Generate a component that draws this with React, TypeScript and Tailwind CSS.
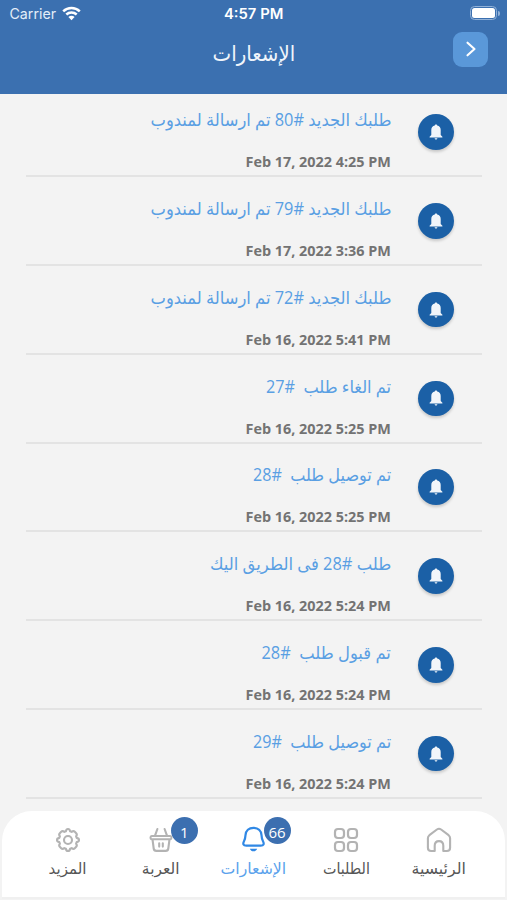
import { useLayoutEffect, useRef } from 'react';
import type { ReactNode } from 'react';

const arabic = "font-['Open_Sans','DejaVu_Sans',sans-serif]";

type FitProps = { text: string; width: number; className?: string; dir?: 'rtl' | 'ltr' };

// A single line of text squeezed or stretched to an exact width.
function Fit({ text, width, className = '', dir = 'rtl' }: FitProps) {
  const ref = useRef<HTMLSpanElement>(null);
  useLayoutEffect(() => {
    const el = ref.current;
    if (el) el.style.transform = `scaleX(${width / el.offsetWidth})`;
  }, [text, width]);
  return (
    <div dir={dir} className="flex justify-center whitespace-pre" style={{ width }}>
      <span ref={ref} className={`inline-block shrink-0 origin-center ${className}`}>{text}</span>
    </div>
  );
}

const items = [
  { title: 'طلبك الجديد #80 تم ارسالة لمندوب', w: 241, date: 'Feb 17, 2022 4:25 PM' },
  { title: 'طلبك الجديد #79 تم ارسالة لمندوب', w: 241, date: 'Feb 17, 2022 3:36 PM' },
  { title: 'طلبك الجديد #72 تم ارسالة لمندوب', w: 241, date: 'Feb 16, 2022 5:41 PM' },
  { title: 'تم الغاء طلب  #27', w: 125, date: 'Feb 16, 2022 5:25 PM' },
  { title: 'تم توصيل طلب  #28', w: 138, date: 'Feb 16, 2022 5:25 PM' },
  { title: 'طلب #28 فى الطريق اليك', w: 181, date: 'Feb 16, 2022 5:24 PM' },
  { title: 'تم قبول طلب  #28', w: 129, date: 'Feb 16, 2022 5:24 PM' },
  { title: 'تم توصيل طلب  #29', w: 138, date: 'Feb 16, 2022 5:24 PM' },
];

function Row({ title, w, date, first }: { title: string; w: number; date: string; first: boolean }) {
  return (
    <div className={`flex shrink-0 items-end border-b-2 border-[#e3e3e3] ${first ? 'h-[83.8px]' : 'h-[88.8px]'}`}>
      <div className="flex h-[70px] w-[365px] flex-col items-end justify-between pb-[3px]">
        <Fit text={title} width={w} className={`${arabic} text-[17.500px] leading-[28px] text-[#5a9fe3]`} />
        <Fit text={date} width={145} dir="ltr" className="font-['Open_Sans',sans-serif] text-[14.3px] leading-[20px] font-bold text-[#737373]" />
      </div>
      <div className="mb-[25.5px] ml-[27px] flex size-[35.5px] items-center justify-center rounded-full bg-[#1b60a6] shadow-[0_2px_3px_rgba(0,0,0,0.18)]">
        <svg width="14" height="16" viewBox="0 0 14 16" fill="#f1f5fa">
          <path d="M7 .4c-.8 0-1.200.5-1.200 1.200C3.600 2.100 2.300 3.800 2.300 6v5L.6 12.700v.8h12.800v-.8L11.700 11V6c0-2.200-1.300-3.900-3.500-4.400C8.200.9 7.800.4 7 .4ZM5.600 14.200c.1.900.7 1.400 1.400 1.400s1.300-.5 1.400-1.400Z" />
        </svg>
      </div>
    </div>
  );
}

const gray = { fill: 'none', stroke: '#b3b3b3', strokeWidth: 2.1, strokeLinecap: 'round', strokeLinejoin: 'round' } as const;

const gear = (
  <svg width="26" height="26" viewBox="0 0 26 26" {...gray}>
    <path d="M10.900 4.300C11.200 2.600 11.800 2 13 2s1.800.6 2.100 2.300l1.500.6c1.400-1 2.300-1 3.200-.1l1.400 1.400c.9.900.9 1.800-.1 3.200l.6 1.500c1.700.3 2.300.900 2.300 2.100s-.6 1.800-2.300 2.100l-.6 1.500c1 1.400 1 2.300.1 3.200l-1.400 1.400c-.9.900-1.800.9-3.200-.1l-1.500.6C14.800 23.400 14.200 24 13 24s-1.800-.6-2.100-2.300l-1.500-.6c-1.400 1-2.300 1-3.200.1l-1.400-1.400c-.9-.9-.9-1.800.1-3.200l-.6-1.500C2.600 14.800 2 14.200 2 13s.6-1.800 2.300-2.100l.6-1.500c-1-1.400-1-2.300-.1-3.200l1.400-1.400c.9-.9 1.800-.9 3.200.1Z" />
    <circle cx="13" cy="13" r="4" />
  </svg>
);
const basket = (
  <svg width="26" height="26" viewBox="0 0 26 26" {...gray}>
    <path d="M3.600 9h18.800c1.400 0 1.400 3.200 0 3.200H3.600c-1.400 0-1.400-3.200 0-3.200ZM4.500 12.300l1.200 9.200c.2 1.600 1 2.400 2.600 2.400h9.400c1.600 0 2.400-.8 2.600-2.400l1.200-9.200M9.400 2 7 8.700M16.600 2 19 8.700M11.200 16.200v3.400M14.800 16.200v3.400" />
  </svg>
);
const bell = (
  <svg width="26" height="28" viewBox="0 0 26 28" fill="none" stroke="#3088e5" strokeWidth="2.200" strokeLinecap="round" strokeLinejoin="round">
    <path d="M13.500 1.800c-4.700 0-7.700 3.200-8 7.300-.2 3.300-.5 4.300-1.500 6.200-1.400 2.700-.7 4.400 2.300 4.400h14.400c3 0 3.700-1.700 2.300-4.400-1-1.900-1.300-2.900-1.500-6.200-.3-4.100-3.300-7.300-8-7.300Z" />
    <path d="M9.800 22.700h7.400c-.7 1.700-2 2.600-3.700 2.600s-3-.9-3.700-2.600Z" fill="#3088e5" stroke="none" />
  </svg>
);
const grid = (
  <svg width="26" height="26" viewBox="0 0 26 26" {...gray} strokeWidth="2.200">
    <rect x="2" y="2" width="9" height="9" rx="3" />
    <rect x="15" y="2" width="9" height="9" rx="3" />
    <rect x="2" y="15" width="9" height="9" rx="3" />
    <rect x="15" y="15" width="9" height="9" rx="3" />
  </svg>
);
const home = (
  <svg width="26" height="26" viewBox="0 0 26 26" {...gray}>
    <path d="M10.900 2.500 3.400 8.200C2.400 9 1.900 9.900 1.900 11.200v9.500c0 2.100 1.200 3.300 3.300 3.300h3.500v-5.300c0-2.700 1.600-4.600 4.300-4.600s4.300 1.900 4.300 4.600V24h3.500c2.100 0 3.300-1.200 3.300-3.300v-9.500c0-1.300-.5-2.200-1.500-3l-7.500-5.700c-1.500-1-2.700-1-4.200 0Z" />
  </svg>
);

type TabProps = { icon: ReactNode; label: string; w: number; badge?: string; active?: boolean };

function Tab({ icon, label, w, badge, active }: TabProps) {
  return (
    <div className="relative flex w-[92.8px] flex-col items-center pt-[14.500px]">
      <div className="flex h-[28px] items-center pt-px">{icon}</div>
      <div className="mt-[-1px]">
        <Fit text={label} width={w} className={`${arabic} text-[15.500px] leading-[30px] ${active ? 'text-[#5aa2ec]' : 'text-[#565656]'}`} />
      </div>
      {badge && (
        <span className="absolute top-[5.500px] left-[56.500px] flex size-[27px] items-center justify-center rounded-full bg-[#3c6fb0] pt-[5px] font-['Open_Sans',sans-serif] text-[15px] leading-none text-white">
          {badge}
        </span>
      )}
    </div>
  );
}

export default function App() {
  return (
    <div dir="ltr" className="flex h-[900px] w-[507px] flex-col overflow-hidden bg-[#f3f3f3]">
      <header className="h-[93.500px] shrink-0 bg-[#3b70b0]">
        <div className="grid h-[28px] grid-cols-3 items-center px-[9px] font-['Inter',sans-serif] text-white">
          <div className="flex items-center gap-[6px]">
            <Fit text="Carrier" width={47} dir="ltr" className="text-[14.500px] text-[#e3edf8]" />
            <svg className="-mt-[2px]" width="19" height="15" viewBox="0 0 19 15" fill="none" stroke="#fff" strokeWidth="2.500">
              <path d="M1.200 5.300c4.700-4.500 11.900-4.500 16.600 0M4.300 8.500c3-2.800 7.400-2.800 10.400 0" />
              <path d="M9.500 14.200 6.400 11c1.800-1.600 4.400-1.600 6.200 0Z" fill="#fff" stroke="none" />
            </svg>
          </div>
          <div className="flex justify-center">
            <Fit text="4:57 PM" width={59} dir="ltr" className="text-[13.800px] font-semibold" />
          </div>
          <div className="mt-[-2px] mr-[-2px] flex items-center justify-end">
            <div className="h-[14px] w-[27px] rounded-[4.500px] border border-[#91b1d8] p-[1px]">
              <div className="h-full rounded-[2.500px] bg-white" />
            </div>
            <div className="ml-[1px] h-[5px] w-[2px] rounded-r-full bg-[#91b1d8]" />
          </div>
        </div>
        <div className="flex pt-[4px]">
          <div className="ml-[212px] pt-[4px]">
            <Fit text="الإشعارات" width={83} className={`${arabic} text-[21.500px] leading-[34px] text-[#f0f5fb]`} />
          </div>
          <button aria-label="رجوع" className="ml-[158px] flex size-[34.500px] items-center justify-center rounded-[9px] bg-[#5a98d9]">
            <svg className="ml-[2px]" width="10" height="16" viewBox="0 0 10 16" fill="none" stroke="#fff" strokeWidth="2.100" strokeLinecap="round" strokeLinejoin="round">
              <path d="m1.500 1.700 7 6.300-7 6.300" />
            </svg>
          </button>
        </div>
      </header>
      <main className="flex h-[717.500px] shrink-0 flex-col overflow-hidden pr-[25px] pl-[26px]">
        {items.map((item, i) => (
          <Row key={i} {...item} first={i === 0} />
        ))}
      </main>
      <nav className="mx-[2px] flex h-[87.500px] shrink-0 rounded-t-[30px] border-b-2 border-[#f0f0f0] bg-white pl-[19.500px]">
        <Tab icon={gear} label="المزيد" w={38} />
        <Tab icon={basket} label="العربة" w={38} badge="1" />
        <Tab icon={bell} label="الإشعارات" w={66} badge="66" active />
        <Tab icon={grid} label="الطلبات" w={47} />
        <Tab icon={home} label="الرئيسية" w={54} />
      </nav>
    </div>
  );
}
